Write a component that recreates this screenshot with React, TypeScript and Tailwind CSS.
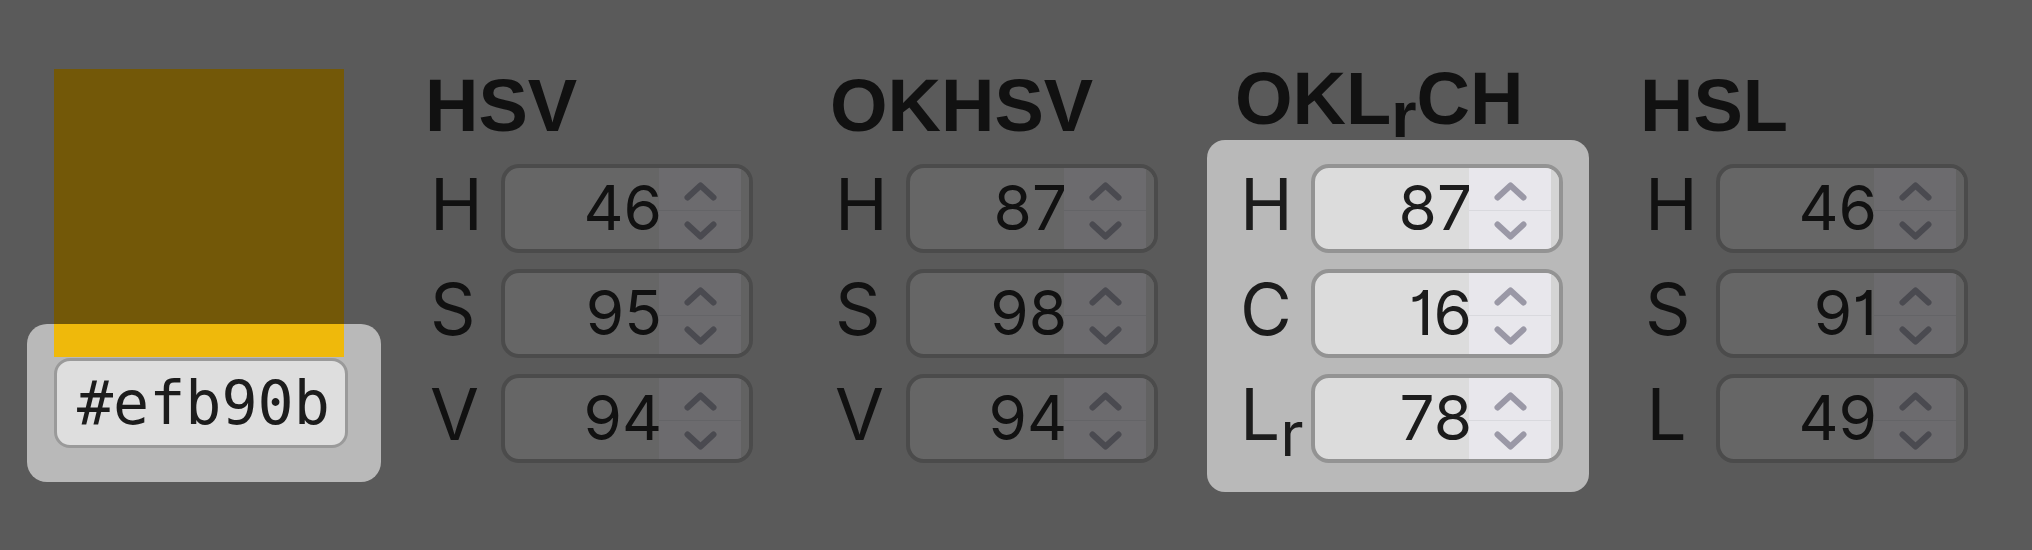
import React from 'react';

type Field = {
    label: string;
    sub?: string;
    value: number;
};

type ColorSpace = {
    key: string;
    title: React.ReactNode;
    raised?: boolean;
    active?: boolean;
    fields: Field[];
};

const spaces: ColorSpace[] = [
    {
        key: 'hsv',
        title: 'HSV',
        fields: [
            { label: 'H', value: 46 },
            { label: 'S', value: 95 },
            { label: 'V', value: 94 },
        ],
    },
    {
        key: 'okhsv',
        title: 'OKHSV',
        fields: [
            { label: 'H', value: 87 },
            { label: 'S', value: 98 },
            { label: 'V', value: 94 },
        ],
    },
    {
        key: 'oklrch',
        title: (
            <>
                OKL<sub className="bottom-[-13px] text-[65px]">r</sub>CH
            </>
        ),
        raised: true,
        active: true,
        fields: [
            { label: 'H', value: 87 },
            { label: 'C', value: 16 },
            { label: 'L', sub: 'r', value: 78 },
        ],
    },
    {
        key: 'hsl',
        title: 'HSL',
        fields: [
            { label: 'H', value: 46 },
            { label: 'S', value: 91 },
            { label: 'L', value: 49 },
        ],
    },
];

const Chevron: React.FC<{ up?: boolean; className: string }> = ({ up, className }) => (
    <svg width="33" height="19" viewBox="0 0 33 19" className={className}>
        <path
            d={up ? 'M3.5 15.5 L16.5 3.5 L29.5 15.5' : 'M3.5 3.5 L16.5 15.5 L29.5 3.5'}
            fill="none"
            stroke="currentColor"
            strokeWidth="6"
            strokeLinecap="round"
            strokeLinejoin="round"
        />
    </svg>
);

const NumberBox: React.FC<{ value: number; active?: boolean }> = ({ value, active }) => (
    <div
        className={`flex h-[89px] w-[252px] overflow-hidden rounded-[18px] border-[4px] ${
            active ? 'border-[#939393] bg-[#dcdcdc] text-[#1c1c1c]' : 'border-[#4b4b4b] bg-[#666666] text-[#111111]'
        }`}
    >
        <div className="-mr-[3px] flex flex-1 items-center justify-end pb-[2px] text-[62px] leading-none">{value}</div>
        <div className={`flex w-[82px] flex-col ${active ? 'bg-[#e8e7ec]' : 'bg-[#6c6b6e]'}`}>
            <div className="flex flex-1 items-center justify-center pt-[4px]">
                <Chevron up className={active ? 'text-[#9a98a6]' : 'text-[#4a4a50]'} />
            </div>
            <div
                className={`flex flex-1 items-center justify-center border-t ${
                    active ? 'border-[#d9d9de]' : 'border-[#646467]'
                }`}
            >
                <Chevron className={active ? 'text-[#9a98a6]' : 'text-[#4a4a50]'} />
            </div>
        </div>
        <div className={`w-[8px] ${active ? 'bg-[#d4d4d4]' : 'bg-[#626262]'}`} />
    </div>
);

const SpaceColumn: React.FC<{ space: ColorSpace }> = ({ space }) => (
    <div className="w-[382px]">
        <div className="flex h-[71px] items-end pl-[28px]">
            <h2
                className={`font-['Liberation_Sans',Arial,sans-serif] text-[74px] font-bold leading-[69px] text-[#111111] ${
                    space.raised ? 'pb-[7px]' : ''
                }`}
            >
                {space.title}
            </h2>
        </div>
        <div
            className={`flex flex-col gap-[16px] rounded-[18px] pt-[24px] pb-[29px] pl-[33px] pr-[26px] ${
                space.active ? 'bg-[#b9b9b9]' : ''
            }`}
        >
            {space.fields.map(field => (
                <div key={field.label} className="flex items-baseline">
                    <div
                        className={`mr-[25px] w-[46px] pr-[3px] text-center text-[71px] leading-none ${
                            space.active ? 'text-[#1c1c1c]' : 'text-[#111111]'
                        }`}
                    >
                        {field.label}
                        {field.sub && <sub className="bottom-[-16px] text-[62px]">{field.sub}</sub>}
                    </div>
                    <NumberBox value={field.value} active={space.active} />
                </div>
            ))}
        </div>
    </div>
);

export default function App() {
    return (
        <div className="flex h-[550px] w-full items-start bg-[#5a5a5a] pl-[27px] pt-[69px] font-['Inter',sans-serif] [font-feature-settings:'cv01']">
            <div className="flex w-[354px] flex-col">
                <div className="ml-[27px] h-[255px] w-[290px] bg-[#735808]" />
                <div className="rounded-[20px] bg-[#b9b9b9] pb-[34px] pl-[27px] pr-[33px]">
                    <div className="h-[33px] w-[290px] bg-[#efb90b]" />
                    <div className="mt-[1px] flex h-[90px] items-center rounded-[16px] border-[3px] border-[#9a9a9a] bg-[#dedede] pl-[20px] font-['DejaVu_Sans_Mono',monospace] text-[60px] leading-none text-[#1c1c1c]">
                        #efb90b
                    </div>
                </div>
            </div>
            <div className="ml-[16px] flex gap-[23px]">
                {spaces.map(space => (
                    <SpaceColumn key={space.key} space={space} />
                ))}
            </div>
        </div>
    );
}
